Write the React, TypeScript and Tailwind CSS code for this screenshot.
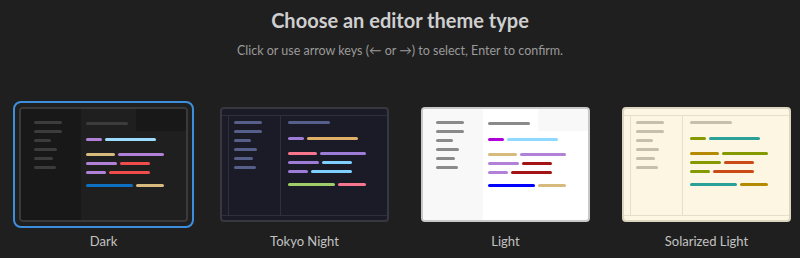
import type { ReactNode } from "react";

type Theme = {
  name: string;
  kind: "tabs" | "frame";
  card: string;
  side: string;
  edge: string;
  muted: string;
  rows: [string, string][];
};

const sideWidths = ["w-[28px]", "w-[28px]", "w-[17px]", "w-[23px]", "w-[19px]", "w-[22px]"];
const rowWidths: [string, string][] = [
  ["w-[16px]", "w-[51px]"],
  ["w-[29px]", "w-[46px]"],
  ["w-[31px]", "w-[30px]"],
  ["w-[20px]", "w-[41px]"],
  ["w-[47px]", "w-[28px]"],
];

const themes: Theme[] = [
  {
    name: "Dark",
    kind: "tabs",
    card: "bg-[#1f1f1f] border-[#3a3a3a]",
    side: "bg-[#181818]",
    edge: "",
    muted: "bg-[#3c3c3c]",
    rows: [
      ["bg-[#b180d7]", "bg-[#9cdcfe]"],
      ["bg-[#d7ba7d]", "bg-[#b180d7]"],
      ["bg-[#b180d7]", "bg-[#f14c4c]"],
      ["bg-[#b180d7]", "bg-[#f14c4c]"],
      ["bg-[#0e70c0]", "bg-[#d7ba7d]"],
    ],
  },
  {
    name: "Tokyo Night",
    kind: "frame",
    card: "bg-[#1a1b26] border-[#36373f]",
    side: "",
    edge: "border-[#2e2f3e]",
    muted: "bg-[#565f89]",
    rows: [
      ["bg-[#9d7cd8]", "bg-[#e0af68]"],
      ["bg-[#f7768e]", "bg-[#9d7cd8]"],
      ["bg-[#9d7cd8]", "bg-[#7dcfff]"],
      ["bg-[#9d7cd8]", "bg-[#7dcfff]"],
      ["bg-[#9ece6a]", "bg-[#f7768e]"],
    ],
  },
  {
    name: "Light",
    kind: "tabs",
    card: "bg-white border-[#c8c8c8]",
    side: "bg-[#f8f8f8]",
    edge: "",
    muted: "bg-[#8a8a8a]",
    rows: [
      ["bg-[#af00db]", "bg-[#8fd8ff]"],
      ["bg-[#d7ba7d]", "bg-[#b180d7]"],
      ["bg-[#b180d7]", "bg-[#a31515]"],
      ["bg-[#b180d7]", "bg-[#a31515]"],
      ["bg-[#0000ff]", "bg-[#d7ba7d]"],
    ],
  },
  {
    name: "Solarized Light",
    kind: "frame",
    card: "bg-[#fdf6e3] border-[#dcd5c0]",
    side: "",
    edge: "border-[#e6dfca]",
    muted: "bg-[#c6bfab]",
    rows: [
      ["bg-[#859900]", "bg-[#2aa198]"],
      ["bg-[#b58900]", "bg-[#859900]"],
      ["bg-[#859900]", "bg-[#cb4b16]"],
      ["bg-[#859900]", "bg-[#cb4b16]"],
      ["bg-[#2aa198]", "bg-[#b58900]"],
    ],
  },
];

function Bar({ className }: { className: string }) {
  return <span className={`block h-[3px] rounded-full ${className}`} />;
}

function SideLines({ muted }: { muted: string }) {
  return (
    <div className="flex flex-col gap-[6px]">
      {sideWidths.map((w, i) => (
        <Bar key={i} className={`${w} ${muted}`} />
      ))}
    </div>
  );
}

function CodeRows({ t }: { t: Theme }) {
  const row = (i: number) => (
    <div className="flex gap-[3px]">
      <Bar className={`${rowWidths[i][0]} ${t.rows[i][0]}`} />
      <Bar className={`${rowWidths[i][1]} ${t.rows[i][1]}`} />
    </div>
  );
  return (
    <div className="flex flex-col">
      {row(0)}
      <div className="mt-[12px] flex flex-col gap-[6px]">
        {row(1)}
        {row(2)}
        {row(3)}
      </div>
      <div className="mt-[10px]">{row(4)}</div>
    </div>
  );
}

function Preview({ t }: { t: Theme }) {
  if (t.kind === "tabs") {
    return (
      <div className={`w-[169px] h-[115px] rounded-[4px] border-2 overflow-hidden flex ${t.card}`}>
        <div className={`w-[60px] pl-[13px] pt-[12px] ${t.side}`}>
          <SideLines muted={t.muted} />
        </div>
        <div className="flex-1 flex flex-col">
          <div className={`h-[22px] flex ${t.side}`}>
            <div className={`w-[55px] pl-[5px] pt-[13px] ${t.card.split(" ")[0]}`}>
              <Bar className={`w-[42px] ${t.muted}`} />
            </div>
          </div>
          <div className="pl-[5px] pt-[7px]">
            <CodeRows t={t} />
          </div>
        </div>
      </div>
    );
  }
  return (
    <div className={`w-[169px] h-[115px] rounded-[4px] border-2 overflow-hidden flex flex-col ${t.card}`}>
      <div className={`h-[7px] border-b ${t.edge}`} />
      <div className="flex-1 flex">
        <div className={`w-[7px] border-r ${t.edge}`} />
        <div className={`w-[52px] border-r pl-[5px] pt-[5px] ${t.edge}`}>
          <SideLines muted={t.muted} />
        </div>
        <div className="flex-1 pl-[7px] pt-[5px]">
          <Bar className={`w-[42px] ${t.muted}`} />
          <div className="mt-[13px]">
            <CodeRows t={t} />
          </div>
        </div>
      </div>
      <div className={`h-[5px] border-t ${t.edge}`} />
    </div>
  );
}

function Option({ t, selected, children }: { t: Theme; selected: boolean; children: ReactNode }) {
  return (
    <div className="flex flex-col items-center">
      <div
        className={`p-[4px] border-2 rounded-[8px] ${selected ? "border-[#3d8fdc]" : "border-transparent"}`}
      >
        {children}
      </div>
      <span className="mt-[4px] text-[13px] leading-[18px] text-[#c2c2c2]">{t.name}</span>
    </div>
  );
}

export default function App() {
  return (
    <div
      className="w-[800px] h-[258px] bg-[#1f1f1f] flex flex-col items-center overflow-hidden"
      style={{ fontFamily: 'Lato, "Noto Sans", sans-serif' }}
    >
      <h1 className="pt-[8px] text-[20px] leading-[24px] font-bold text-[#cfcfcf]">
        Choose an editor theme type
      </h1>
      <p className="mt-[10px] text-[12.5px] leading-[18px] text-[#9a9a9a]">
        Click or use arrow keys (← or →) to select, Enter to confirm.
      </p>
      <div className="mt-[41px] self-stretch flex gap-[20px] pl-[13px]">
        {themes.map((t, i) => (
          <Option key={t.name} t={t} selected={i === 0}>
            <Preview t={t} />
          </Option>
        ))}
      </div>
    </div>
  );
}
